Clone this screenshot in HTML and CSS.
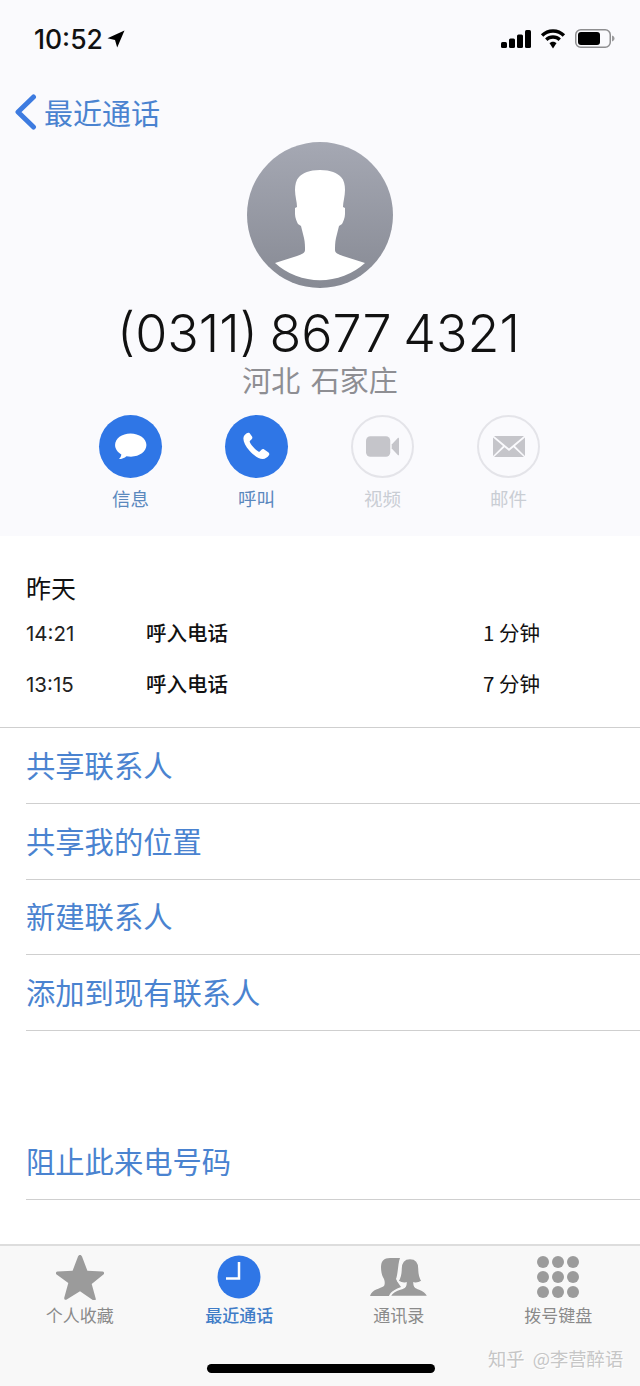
FILE: index.html
```html
<!DOCTYPE html>
<html lang="zh-CN">
<head>
    <meta charset="UTF-8">
    <meta name="viewport" content="width=device-width, initial-scale=1.0">
    <title>最近通话</title>
    <link rel="stylesheet" href="styles.css">
</head>
<body>
    <div class="phone">
        <header class="top">
            <div class="status-bar">
                <div class="status-time">
                    <span>10:52</span>
                    <svg class="location" viewBox="0 0 18 18"><path d="M17.500 .5 10.200 17.500 8 10 .5 8.200z"/></svg>
                </div>
                <div class="status-icons">
                    <svg class="signal" viewBox="0 0 30 18"><rect x="0" y="12" width="6" height="6" rx="1.500"/><rect x="8" y="8.500" width="6" height="9.500" rx="1.500"/><rect x="16" y="4.500" width="6" height="13.500" rx="1.500"/><rect x="24" y="0" width="6" height="18" rx="1.500"/></svg>
                    <svg class="wifi" viewBox="1 0 24 19"><path d="M13 3.600c3.600 0 6.800 1.400 9.200 3.700L24.500 5C21.500 2 17.500 .2 13 .2S4.500 2 1.500 5l2.300 2.300C6.200 5 9.400 3.600 13 3.600z"/><path d="M13 9.300c2 0 3.900.8 5.200 2.100l2.300-2.400C18.500 7.100 15.900 6 13 6S7.500 7.100 5.500 9l2.300 2.400c1.300-1.300 3.200-2.100 5.200-2.100z"/><path d="M13 12c-1.400 0-2.600.6-3.400 1.400L13 18.500l3.400-5.100C15.600 12.600 14.400 12 13 12z"/></svg>
                    <svg class="battery" viewBox="0 0 40 20"><rect x=".75" y=".75" width="34.500" height="17.500" rx="5" fill="none" stroke="#8e8e90" stroke-width="1.500"/><rect x="3" y="3" width="22" height="13" rx="3"/><path d="M37 6.500c1.500.4 2.500 1.600 2.500 3s-1 2.600-2.500 3z" fill="#9a9a9c"/></svg>
                </div>
            </div>

            <div class="nav-bar">
                <svg class="back-arrow" viewBox="0 0 24 36"><path d="M19.500 3 4 18l15.500 15" fill="none" stroke="#3d7be0" stroke-width="5" stroke-linecap="round" stroke-linejoin="round"/></svg>
                <span class="back-label">最近通话</span>
            </div>

            <div class="contact">
                <svg class="avatar" viewBox="0 0 146 146">
                    <defs>
                        <linearGradient id="avatarFill" x1="0" y1="0" x2="0" y2="1">
                            <stop offset="0" stop-color="#a5a8b3"/>
                            <stop offset="1" stop-color="#878a94"/>
                        </linearGradient>
                    </defs>
                    <circle cx="73" cy="73" r="73" fill="url(#avatarFill)"/>
                    <path fill="#fff" d="M73 28C62 28 56 31 52 35 49 38 48 43 48 48 48 54 50 60 50 65L48 66V72C48 76 50 80 51 82L54 84C55 88 56 92 57 96 58 100 58 105 58 108 58 111 55 112 50 114L28 121A67 67 0 0 0 118 121L96 114C91 112 88 111 88 108 88 105 88 100 89 96 90 92 91 88 92 84L95 82C96 80 98 76 98 72V66L96 65C96 60 98 54 98 48 98 43 97 38 94 35 90 31 84 28 73 28Z"/>
                </svg>
                <h1 class="contact-number">(0311) 8677 4321</h1>
                <p class="contact-place">河北 石家庄</p>
            </div>

            <div class="actions">
                <div class="action">
                    <div class="action-circle active">
                        <svg viewBox="0 0 34 28"><path fill="#fff" d="M17 .5C8 .5 1 5.800 1 12.500c0 4 2.500 7.500 6.500 9.700-.3 2-1.300 3.800-2.500 4.800 2.800 0 6-1.200 7.800-3 1.500.3 3 .5 4.700.5 9 0 16-5.300 16-12S26 .5 17 .5z"/></svg>
                    </div>
                    <span class="action-label">信息</span>
                </div>
                <div class="action">
                    <div class="action-circle active">
                        <svg viewBox="0 0 30 30"><path fill="#fff" d="M7.500 1.200c-1-.6-2-.5-3 .2C2.700 2.600 1.200 4.300 1 6.500c-.3 3.500 2 8.500 6.500 13.500 4.800 5.300 10 8.800 14 9 2.800.1 5.300-1.800 6.800-4 .7-1 .5-2.200-.4-3l-4.600-3.200c-1-.7-2.100-.6-3 .2l-1.800 1.800c-.5.4-1 .4-1.500.1-1.700-1-3.800-2.700-5.500-4.700-1.700-2-3-4-3.700-5.500-.2-.5-.1-1 .3-1.400l1.700-1.500c.9-.9 1-2 .4-3z"/></svg>
                    </div>
                    <span class="action-label">呼叫</span>
                </div>
                <div class="action off">
                    <div class="action-circle">
                        <svg viewBox="0 0 34 21"><rect x="0" y="0" width="25" height="21" rx="4.500" fill="#c5c5ca"/><path fill="#c5c5ca" d="M26.500 8.500 33 1.500c.5-.3 1-.1 1 .5v17c0 .6-.5.8-1 .5l-6.500-7z"/></svg>
                    </div>
                    <span class="action-label">视频</span>
                </div>
                <div class="action off">
                    <div class="action-circle">
                        <svg viewBox="0 0 32 21"><path fill="#c5c5ca" d="M1 0h30L16 12.500zM0 1.500 10 10 0 20zM32 1.500 22 10l10 10zM1 21l10.500-9.800L16 15l4.500-3.800L31 21z"/></svg>
                    </div>
                    <span class="action-label">邮件</span>
                </div>
            </div>
        </header>

        <main class="details">
            <section class="history">
                <h2 class="history-day">昨天</h2>
                <div class="call-row">
                    <span class="call-time">14:21</span>
                    <span class="call-type">呼入电话</span>
                    <span class="call-length">1 分钟</span>
                </div>
                <div class="call-row">
                    <span class="call-time">13:15</span>
                    <span class="call-type">呼入电话</span>
                    <span class="call-length">7 分钟</span>
                </div>
            </section>

            <ul class="links">
                <li>共享联系人</li>
                <li>共享我的位置</li>
                <li>新建联系人</li>
                <li>添加到现有联系人</li>
            </ul>

            <ul class="links block-link">
                <li>阻止此来电号码</li>
            </ul>
        </main>

        <footer class="tab-bar">
            <div class="tab">
                <svg class="tab-icon" viewBox="0 0 48 46"><path fill="#9b9b9b" d="M24 1c1 0 1.600.6 2 1.600l5.400 14.200 15 .8c1.800.1 2.300 1.800 1 2.900l-11.700 9.500 4 14.600c.4 1.600-1 2.700-2.400 1.800L24 37.200l-13.300 8.200c-1.400.9-2.800-.2-2.400-1.800l4-14.600L.6 20.500c-1.300-1.100-.8-2.800 1-2.900l15-.8L22 2.600c.4-1 1-1.600 2-1.600z"/></svg>
                <span class="tab-label">个人收藏</span>
            </div>
            <div class="tab current">
                <svg class="tab-icon" viewBox="0 0 44 44"><circle cx="22" cy="22" r="21.500" fill="#2f76e6"/><path d="M22 7v16.500H9" fill="none" stroke="#fff" stroke-width="2.500"/></svg>
                <span class="tab-label">最近通话</span>
            </div>
            <div class="tab">
                <svg class="tab-icon" viewBox="0 0 58 38">
                    <path fill="#9b9b9b" d="M20 0C14 0 11 3 11 9 11 14 12 18 14 21 15 24 15 26 14 28 10 31 2 31 0 38H36V0Z"/>
                    <path fill="#f8f8f8" d="M30 0H40V38H19C21 33 26 31 31 29 28 25 27 23 26 21 28 16 28 5 30 0Z"/>
                    <path fill="#9b9b9b" stroke="#f8f8f8" stroke-width="1.500" d="M40 .5C33 .5 31 5 31 11 31 16 30 20 28 23 31 25 34 25.500 36 25 36 28 35 29.500 33 30 28 32 22 33 20 38.500H58C56 33 51 32 47 30 45 29.500 44 28 44 25 46 25.500 49 25 52 23 50 20 49 16 49 11 49 5 47 .5 40 .5Z"/>
                </svg>
                <span class="tab-label">通讯录</span>
            </div>
            <div class="tab">
                <div class="keypad">
                    <i></i><i></i><i></i>
                    <i></i><i></i><i></i>
                    <i></i><i></i><i></i>
                </div>
                <span class="tab-label">拨号键盘</span>
            </div>
            <div class="home-bar"></div>
            <div class="watermark">知乎&nbsp; @李营醉语</div>
        </footer>
    </div>
</body>
</html>
```

FILE: styles.css
```css
* {
    box-sizing: border-box;
}
body {
    margin: 0;
    background-color: #fff;
    font-family: "Noto Sans CJK SC", "Noto Sans", sans-serif;
}
ul {
    list-style: none;
    margin: 0;
    padding: 0;
}
svg {
    display: block;
}
.phone {
    width: 640px;
    height: 1386px;
    display: flex;
    flex-direction: column;
    overflow: hidden;
}

/* top block */
.top {
    height: 536px;
    background-color: #fafafd;
}
.status-bar {
    height: 78px;
    padding: 0 25px 0 34px;
    display: flex;
    justify-content: space-between;
    align-items: center;
}
.status-time {
    display: flex;
    align-items: center;
    gap: 4px;
    font-family: Inter, sans-serif;
    font-size: 26.500px;
    font-weight: 500;
    color: #111;
}
.location {
    width: 18px;
    height: 18px;
}
.status-icons {
    display: flex;
    align-items: center;
    gap: 9px;
}
.signal {
    width: 30px;
    height: 18px;
}
.wifi {
    width: 26px;
    height: 20px;
}
.battery {
    width: 40px;
    height: 20px;
}
.nav-bar {
    height: 64px;
    padding: 4px 0 0 14px;
    display: flex;
    align-items: center;
    gap: 6px;
}
.back-arrow {
    width: 24px;
    height: 36px;
}
.back-label {
    font-size: 29px;
    color: #4a83d0;
}
.contact {
    display: flex;
    flex-direction: column;
    align-items: center;
}
.avatar {
    width: 146px;
    height: 146px;
}
.contact-number {
    margin: 13.500px 0 0;
    padding-right: 3px;
    font-family: Inter, sans-serif;
    font-size: 52px;
    font-weight: 300;
    line-height: 63px;
    word-spacing: -3px;
    color: #111;
}
.contact-place {
    margin: 0;
    font-size: 29px;
    line-height: 29px;
    word-spacing: 4px;
    color: #8e8e93;
}
.actions {
    margin-top: 21px;
    padding: 0 0 0 99px;
    display: flex;
    gap: 63px;
}
.action {
    width: 63px;
    display: flex;
    flex-direction: column;
    align-items: center;
    gap: 7px;
}
.action-circle {
    width: 63px;
    height: 63px;
    border: 2px solid #e4e4e9;
    border-radius: 50%;
    display: flex;
    justify-content: center;
    align-items: center;
}
.action-circle.active {
    background-color: #2f76e6;
    border: 0;
}
.action-label {
    font-size: 18.500px;
    line-height: 26px;
    color: #5a88bd;
}
.action.off .action-label {
    color: #c9cdd4;
}
.action:nth-child(1) svg {
    width: 33px;
    height: 27px;
}
.action:nth-child(2) svg {
    width: 29px;
    height: 28px;
}
.action:nth-child(3) svg {
    width: 33px;
    height: 21px;
}
.action:nth-child(4) svg {
    width: 32px;
    height: 21px;
}

/* call history and links */
.details {
    flex: 1;
    background-color: #fff;
}
.history {
    height: 192px;
    padding: 33px 0 0 26px;
    border-bottom: 1px solid #cfcfcf;
}
.history-day {
    margin: 0 0 1px;
    font-size: 25px;
    font-weight: 400;
    line-height: 36px;
    color: #111;
}
.call-row {
    height: 51px;
    display: flex;
    align-items: center;
    font-size: 20.500px;
    color: #111;
}
.call-time {
    width: 120px;
    padding-top: 3px;
    font-family: Inter, sans-serif;
    font-size: 20.500px;
    font-weight: 400;
    color: #222;
}
.call-type {
    width: 337px;
    font-weight: 500;
}
.call-length {
    font-size: 20.500px;
}
.links li {
    height: 75.750px;
    padding-bottom: 3px;
    margin-left: 26px;
    display: flex;
    align-items: center;
    border-bottom: 1px solid #cfcfcf;
    font-size: 29.300px;
    color: #4a83d0;
}
.block-link {
    margin-top: 93px;
}

/* tab bar */
.tab-bar {
    position: relative;
    height: 142px;
    padding-top: 8px;
    background-color: #f8f8f8;
    border-top: 2px solid #ddd;
    display: flex;
    align-items: flex-start;
}
.tab {
    width: 159.500px;
    display: flex;
    flex-direction: column;
    align-items: center;
}
.tab-icon {
    width: 48px;
    height: 46px;
}
.tab:nth-child(2) .tab-icon {
    width: 44px;
    height: 44px;
    margin: 1px 0;
}
.tab:nth-child(3) .tab-icon {
    width: 58px;
    height: 38px;
    margin: 4px 0 4px;
}
.keypad {
    width: 42px;
    height: 42px;
    margin: 2px 0;
    display: grid;
    grid-template-columns: repeat(3, 12px);
    grid-auto-rows: 12px;
    justify-content: space-between;
    align-content: space-between;
}
.keypad i {
    border-radius: 50%;
    background-color: #9b9b9b;
}
.tab-label {
    margin-top: 3px;
    font-size: 17px;
    line-height: 24px;
    color: #8a8a8a;
}
.tab.current .tab-label {
    color: #3f7cc7;
    font-weight: 500;
}
.home-bar {
    position: absolute;
    left: 207px;
    top: 118px;
    width: 228px;
    height: 9px;
    border-radius: 5px;
    background-color: #000;
}
.watermark {
    position: absolute;
    left: 488px;
    top: 99px;
    font-size: 18.300px;
    line-height: 26px;
    white-space: nowrap;
    color: #c6c6c6;
    text-shadow: 1px 1px 0 #fff;
}
```
